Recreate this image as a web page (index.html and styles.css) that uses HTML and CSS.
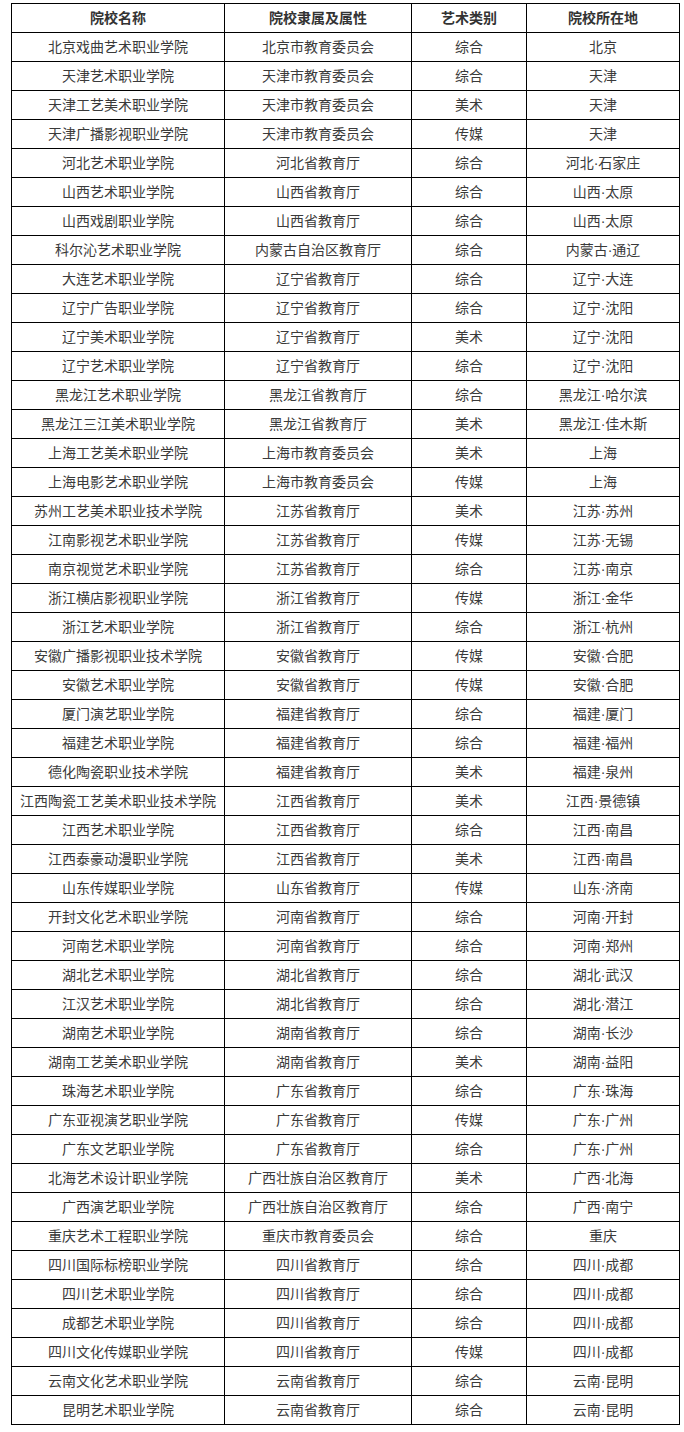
FILE: index.html
```html
<!DOCTYPE html>
<html lang="zh-CN">
<head>
<meta charset="utf-8">
<link rel="stylesheet" href="styles.css">
</head>
<body>
<table class="schools">
<colgroup><col class="c1"><col class="c2"><col class="c3"><col class="c4"></colgroup>
<thead>
<tr><th>院校名称</th><th>院校隶属及属性</th><th>艺术类别</th><th>院校所在地</th></tr>
</thead>
<tbody>
<tr><td>北京戏曲艺术职业学院</td><td>北京市教育委员会</td><td>综合</td><td>北京</td></tr>
<tr><td>天津艺术职业学院</td><td>天津市教育委员会</td><td>综合</td><td>天津</td></tr>
<tr><td>天津工艺美术职业学院</td><td>天津市教育委员会</td><td>美术</td><td>天津</td></tr>
<tr><td>天津广播影视职业学院</td><td>天津市教育委员会</td><td>传媒</td><td>天津</td></tr>
<tr><td>河北艺术职业学院</td><td>河北省教育厅</td><td>综合</td><td>河北·石家庄</td></tr>
<tr><td>山西艺术职业学院</td><td>山西省教育厅</td><td>综合</td><td>山西·太原</td></tr>
<tr><td>山西戏剧职业学院</td><td>山西省教育厅</td><td>综合</td><td>山西·太原</td></tr>
<tr><td>科尔沁艺术职业学院</td><td>内蒙古自治区教育厅</td><td>综合</td><td>内蒙古·通辽</td></tr>
<tr><td>大连艺术职业学院</td><td>辽宁省教育厅</td><td>综合</td><td>辽宁·大连</td></tr>
<tr><td>辽宁广告职业学院</td><td>辽宁省教育厅</td><td>综合</td><td>辽宁·沈阳</td></tr>
<tr><td>辽宁美术职业学院</td><td>辽宁省教育厅</td><td>美术</td><td>辽宁·沈阳</td></tr>
<tr><td>辽宁艺术职业学院</td><td>辽宁省教育厅</td><td>综合</td><td>辽宁·沈阳</td></tr>
<tr><td>黑龙江艺术职业学院</td><td>黑龙江省教育厅</td><td>综合</td><td>黑龙江·哈尔滨</td></tr>
<tr><td>黑龙江三江美术职业学院</td><td>黑龙江省教育厅</td><td>美术</td><td>黑龙江·佳木斯</td></tr>
<tr><td>上海工艺美术职业学院</td><td>上海市教育委员会</td><td>美术</td><td>上海</td></tr>
<tr><td>上海电影艺术职业学院</td><td>上海市教育委员会</td><td>传媒</td><td>上海</td></tr>
<tr><td>苏州工艺美术职业技术学院</td><td>江苏省教育厅</td><td>美术</td><td>江苏·苏州</td></tr>
<tr><td>江南影视艺术职业学院</td><td>江苏省教育厅</td><td>传媒</td><td>江苏·无锡</td></tr>
<tr><td>南京视觉艺术职业学院</td><td>江苏省教育厅</td><td>综合</td><td>江苏·南京</td></tr>
<tr><td>浙江横店影视职业学院</td><td>浙江省教育厅</td><td>传媒</td><td>浙江·金华</td></tr>
<tr><td>浙江艺术职业学院</td><td>浙江省教育厅</td><td>综合</td><td>浙江·杭州</td></tr>
<tr><td>安徽广播影视职业技术学院</td><td>安徽省教育厅</td><td>传媒</td><td>安徽·合肥</td></tr>
<tr><td>安徽艺术职业学院</td><td>安徽省教育厅</td><td>传媒</td><td>安徽·合肥</td></tr>
<tr><td>厦门演艺职业学院</td><td>福建省教育厅</td><td>综合</td><td>福建·厦门</td></tr>
<tr><td>福建艺术职业学院</td><td>福建省教育厅</td><td>综合</td><td>福建·福州</td></tr>
<tr><td>德化陶瓷职业技术学院</td><td>福建省教育厅</td><td>美术</td><td>福建·泉州</td></tr>
<tr><td>江西陶瓷工艺美术职业技术学院</td><td>江西省教育厅</td><td>美术</td><td>江西·景德镇</td></tr>
<tr><td>江西艺术职业学院</td><td>江西省教育厅</td><td>综合</td><td>江西·南昌</td></tr>
<tr><td>江西泰豪动漫职业学院</td><td>江西省教育厅</td><td>美术</td><td>江西·南昌</td></tr>
<tr><td>山东传媒职业学院</td><td>山东省教育厅</td><td>传媒</td><td>山东·济南</td></tr>
<tr><td>开封文化艺术职业学院</td><td>河南省教育厅</td><td>综合</td><td>河南·开封</td></tr>
<tr><td>河南艺术职业学院</td><td>河南省教育厅</td><td>综合</td><td>河南·郑州</td></tr>
<tr><td>湖北艺术职业学院</td><td>湖北省教育厅</td><td>综合</td><td>湖北·武汉</td></tr>
<tr><td>江汉艺术职业学院</td><td>湖北省教育厅</td><td>综合</td><td>湖北·潜江</td></tr>
<tr><td>湖南艺术职业学院</td><td>湖南省教育厅</td><td>综合</td><td>湖南·长沙</td></tr>
<tr><td>湖南工艺美术职业学院</td><td>湖南省教育厅</td><td>美术</td><td>湖南·益阳</td></tr>
<tr><td>珠海艺术职业学院</td><td>广东省教育厅</td><td>综合</td><td>广东·珠海</td></tr>
<tr><td>广东亚视演艺职业学院</td><td>广东省教育厅</td><td>传媒</td><td>广东·广州</td></tr>
<tr><td>广东文艺职业学院</td><td>广东省教育厅</td><td>综合</td><td>广东·广州</td></tr>
<tr><td>北海艺术设计职业学院</td><td>广西壮族自治区教育厅</td><td>美术</td><td>广西·北海</td></tr>
<tr><td>广西演艺职业学院</td><td>广西壮族自治区教育厅</td><td>综合</td><td>广西·南宁</td></tr>
<tr><td>重庆艺术工程职业学院</td><td>重庆市教育委员会</td><td>综合</td><td>重庆</td></tr>
<tr><td>四川国际标榜职业学院</td><td>四川省教育厅</td><td>综合</td><td>四川·成都</td></tr>
<tr><td>四川艺术职业学院</td><td>四川省教育厅</td><td>综合</td><td>四川·成都</td></tr>
<tr><td>成都艺术职业学院</td><td>四川省教育厅</td><td>综合</td><td>四川·成都</td></tr>
<tr><td>四川文化传媒职业学院</td><td>四川省教育厅</td><td>传媒</td><td>四川·成都</td></tr>
<tr><td>云南文化艺术职业学院</td><td>云南省教育厅</td><td>综合</td><td>云南·昆明</td></tr>
<tr><td>昆明艺术职业学院</td><td>云南省教育厅</td><td>综合</td><td>云南·昆明</td></tr>
</tbody>
</table>
</body>
</html>
```
FILE: styles.css
```css
html, body {
  margin: 0;
  padding: 0;
  background: #ffffff;
}
body {
  padding: 3px 0 0 11px;
  font-family: "Liberation Sans", "Noto Sans CJK SC", sans-serif;
  font-size: 14px;
  color: #3a3a3a;
}
.schools {
  border-collapse: collapse;
  table-layout: fixed;
  width: 668px;
}
.c1 { width: 213px; }
.c2 { width: 187px; }
.c3 { width: 115px; }
.c4 { width: 153px; }
.schools th,
.schools td {
  border: 1px solid #000;
  padding: 0;
  height: 28px;
  text-align: center;
  vertical-align: middle;
  line-height: 20px;
  white-space: nowrap;
  font-weight: normal;
}
.schools th {
  font-weight: bold;
  color: #333;
}
```
